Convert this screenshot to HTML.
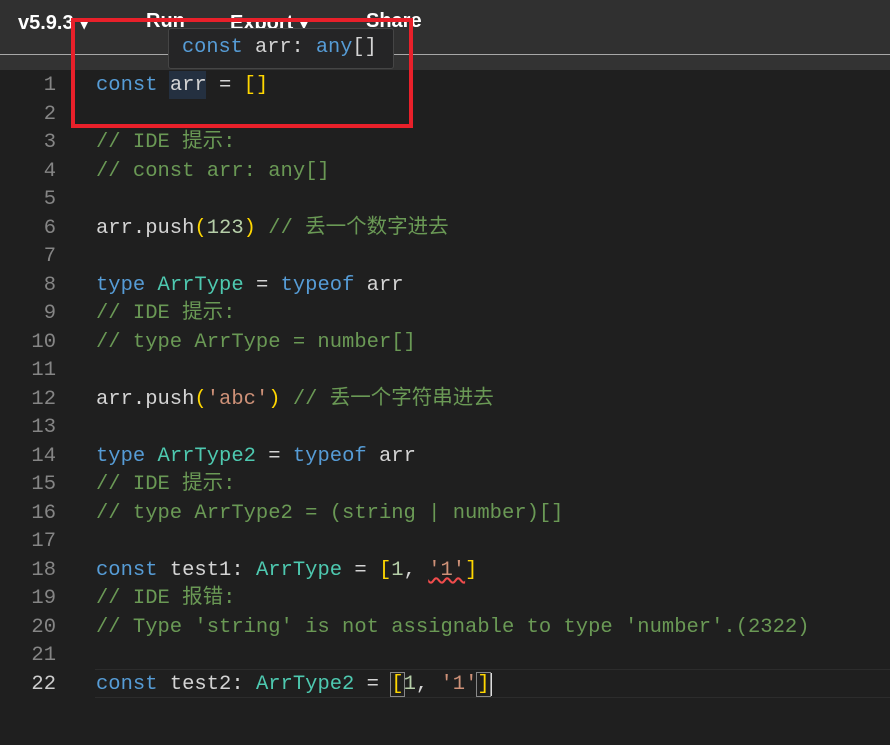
<!DOCTYPE html>
<html><head><meta charset="utf-8"><style>
body{margin:0;width:890px;height:745px;background:#1f1f1f;overflow:hidden;position:relative;font-family:"Liberation Mono","Noto Sans CJK SC",monospace}
.top{position:absolute;left:0;top:0;width:890px;height:54px;background:#303030}
.hl{position:absolute;left:0;top:54px;width:890px;height:1px;background:#a8a8a8}
.band{position:absolute;left:0;top:55px;width:890px;height:15px;background:#333}
.nav{position:absolute;top:10px;font:bold 20px "Liberation Sans",sans-serif;color:#fff}
.ln{position:absolute;left:0;width:56px;text-align:right;color:#858585;font-size:20.5px;line-height:28.52px}
.cd{position:absolute;left:96px;color:#d4d4d4;font-size:20.5px;line-height:28.52px;white-space:pre}
.k{color:#569cd6}.t{color:#4ec9b0}.c{color:#6a9955}.s{color:#ce9178}.n{color:#b5cea8}.b{color:#ffd700}
.tip{position:absolute;left:168px;top:28px;width:226px;height:41px;background:#252526;border:1px solid #454545;border-radius:3px;box-sizing:border-box;font-size:20.3px;line-height:38px;padding-left:13px;color:#d4d4d4;white-space:pre}
.red{position:absolute;left:71px;top:18px;width:342px;height:110px;border:4px solid #e8202a;box-sizing:border-box}
</style></head><body>
<div class="top"></div><div class="hl"></div><div class="band"></div>
<div class="nav" style="left:18px">v5.9.3 ▾</div>
<div class="nav" style="left:146px">Run</div>
<div class="nav" style="left:230px">Export ▾</div>
<div class="nav" style="left:366px">Share</div>
<div style="position:absolute;left:95px;top:669px;width:795px;height:29px;border-top:1px solid #2c2c2c;border-bottom:1px solid #2c2c2c;box-sizing:border-box"></div>
<div style="position:absolute;left:169px;top:71px;width:37px;height:28px;background:#243040"></div>
<div class="ln" style="top:72px">1<br>2<br>3<br>4<br>5<br>6<br>7<br>8<br>9<br>10<br>11<br>12<br>13<br>14<br>15<br>16<br>17<br>18<br>19<br>20<br>21<br><span style="color:#ccc">22</span></div>
<div class="cd" style="top:72px"><span class="k">const</span> arr = <span class="b">[]</span>

<span class="c">// IDE 提示:</span>
<span class="c">// const arr: any[]</span>

arr.push<span class="b">(</span><span class="n">123</span><span class="b">)</span> <span class="c">// 丢一个数字进去</span>

<span class="k">type</span> <span class="t">ArrType</span> = <span class="k">typeof</span> arr
<span class="c">// IDE 提示:</span>
<span class="c">// type ArrType = number[]</span>

arr.push<span class="b">(</span><span class="s">'abc'</span><span class="b">)</span> <span class="c">// 丢一个字符串进去</span>

<span class="k">type</span> <span class="t">ArrType2</span> = <span class="k">typeof</span> arr
<span class="c">// IDE 提示:</span>
<span class="c">// type ArrType2 = (string | number)[]</span>

<span class="k">const</span> test1: <span class="t">ArrType</span> = <span class="b">[</span><span class="n">1</span>, <span class="s" style="text-decoration:underline wavy #f14c4c">'1'</span><span class="b">]</span>
<span class="c">// IDE 报错:</span>
<span class="c">// Type 'string' is not assignable to type 'number'.(2322)</span>

<span class="k">const</span> test2: <span class="t">ArrType2</span> = <span class="b" style="outline:1px solid #888">[</span><span class="n">1</span>, <span class="s">'1'</span><span class="b" style="outline:1px solid #888">]</span><span style="border-left:2px solid #ddd"></span></div>
<div class="tip"><span class="k">const</span> arr: <span class="k">any</span>[]</div>
<div class="red"></div>
</body></html>
